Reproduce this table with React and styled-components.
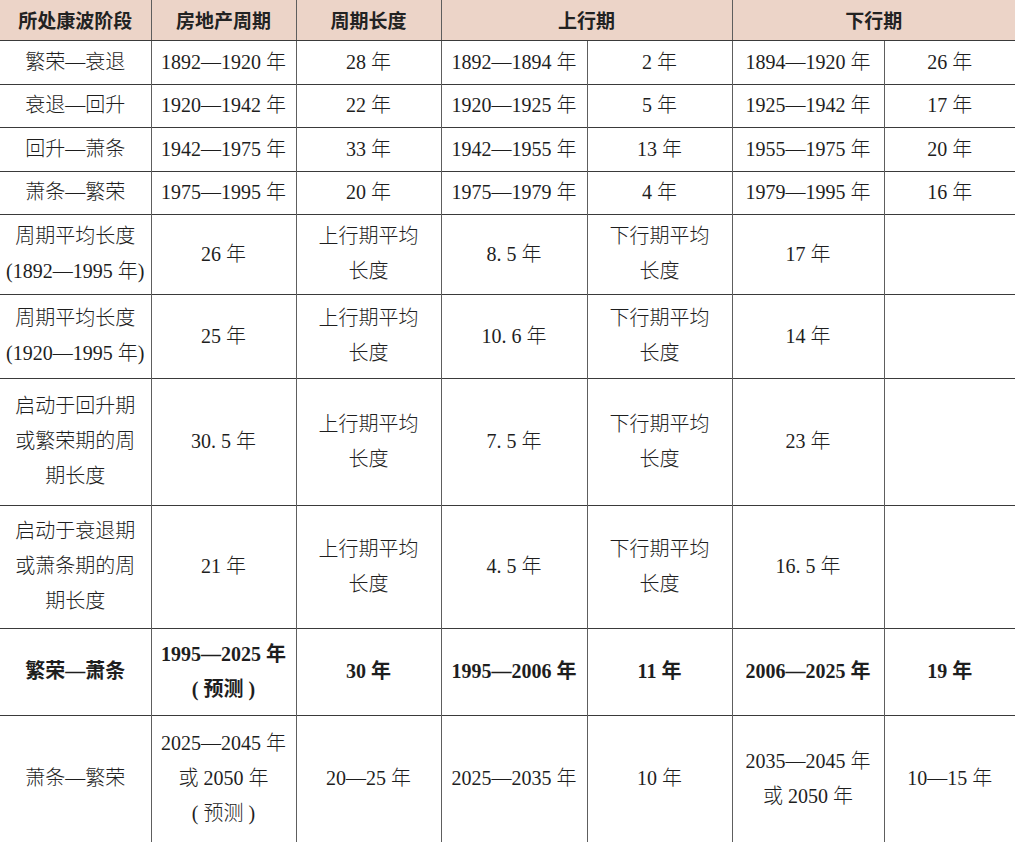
import styled, { createGlobalStyle } from "styled-components";

const GlobalStyle = createGlobalStyle`
  html, body {
    margin: 0;
    padding: 0;
    background: #ffffff;
  }
  body {
    width: 1015px;
    height: 842px;
    overflow: hidden;
  }
`;

const widths = [151, 145, 145, 146, 145, 152, 131];

const rows = [
  { h: 44, cells: ["繁荣—衰退", "1892—1920 年", "28 年", "1892—1894 年", "2 年", "1894—1920 年", "26 年"] },
  { h: 43, cells: ["衰退—回升", "1920—1942 年", "22 年", "1920—1925 年", "5 年", "1925—1942 年", "17 年"] },
  { h: 44, cells: ["回升—萧条", "1942—1975 年", "33 年", "1942—1955 年", "13 年", "1955—1975 年", "20 年"] },
  { h: 43, cells: ["萧条—繁荣", "1975—1995 年", "20 年", "1975—1979 年", "4 年", "1979—1995 年", "16 年"] },
  { h: 80, cells: [["周期平均长度", "(1892—1995 年)"], "26 年", ["上行期平均", "长度"], "8. 5 年", ["下行期平均", "长度"], "17 年", ""] },
  { h: 84, cells: [["周期平均长度", "(1920—1995 年)"], "25 年", ["上行期平均", "长度"], "10. 6 年", ["下行期平均", "长度"], "14 年", ""] },
  { h: 127, cells: [["启动于回升期", "或繁荣期的周", "期长度"], "30. 5 年", ["上行期平均", "长度"], "7. 5 年", ["下行期平均", "长度"], "23 年", ""] },
  { h: 123, cells: [["启动于衰退期", "或萧条期的周", "期长度"], "21 年", ["上行期平均", "长度"], "4. 5 年", ["下行期平均", "长度"], "16. 5 年", ""] },
  { h: 87, bold: true, cells: ["繁荣—萧条", ["1995—2025 年", "( 预测 )"], "30 年", "1995—2006 年", "11 年", "2006—2025 年", "19 年"] },
  { h: 127, cells: ["萧条—繁荣", ["2025—2045 年", "或 2050 年", "( 预测 )"], "20—25 年", "2025—2035 年", "10 年", ["2035—2045 年", "或 2050 年"], "10—15 年"] },
];

export default function App() {
  return (
    <>
      <GlobalStyle />
      <Table>
        <colgroup>
          {widths.map((w, i) => (
            <col key={i} style={{ width: w }} />
          ))}
        </colgroup>
        <thead>
          <HeadRow>
            <HeadCell>所处康波阶段</HeadCell>
            <HeadCell>房地产周期</HeadCell>
            <HeadCell>周期长度</HeadCell>
            <HeadCell colSpan={2}>上行期</HeadCell>
            <HeadCell colSpan={2}>下行期</HeadCell>
          </HeadRow>
        </thead>
        <tbody>
          {rows.map((row, r) => (
            <Row key={r} style={{ height: row.h }}>
              {row.cells.map((c, i) => (
                <Cell key={i} $bold={row.bold} $first={i === 0}>
                  {Array.isArray(c)
                    ? c.map((line, j) => <Line key={j}>{line}</Line>)
                    : c}
                </Cell>
              ))}
            </Row>
          ))}
        </tbody>
      </Table>
    </>
  );
}

const Table = styled.table`
  width: 1015px;
  table-layout: fixed;
  border-collapse: collapse;
  font-family: "Liberation Serif", "Noto Sans CJK SC", serif;
  font-size: 20px;
  color: #1e1e1e;
`;

const HeadRow = styled.tr`
  height: 40px;
  background: #ecd4c8;
`;

const HeadCell = styled.th`
  font-family: "Noto Sans CJK SC", sans-serif;
  font-weight: 700;
  font-size: 19px;
  color: #222;
  text-align: center;
  vertical-align: middle;
  padding: 0;
  border-bottom: 1px solid #3a3a3a;
  border-left: 1px solid #5e5e5e;

  &:first-child {
    border-left: none;
  }
`;

const Row = styled.tr`
  & + & td {
    border-top: 1px solid #3a3a3a;
  }
`;

const Cell = styled.td`
  text-align: center;
  vertical-align: middle;
  padding: 0 2px;
  line-height: 35px;
  white-space: nowrap;
  font-weight: ${({ $bold }) => ($bold ? 700 : 300)};
  border-left: ${({ $first }) => ($first ? "none" : "1px solid #5e5e5e")};
`;

const Line = styled.div`
  line-height: 35px;
`;
